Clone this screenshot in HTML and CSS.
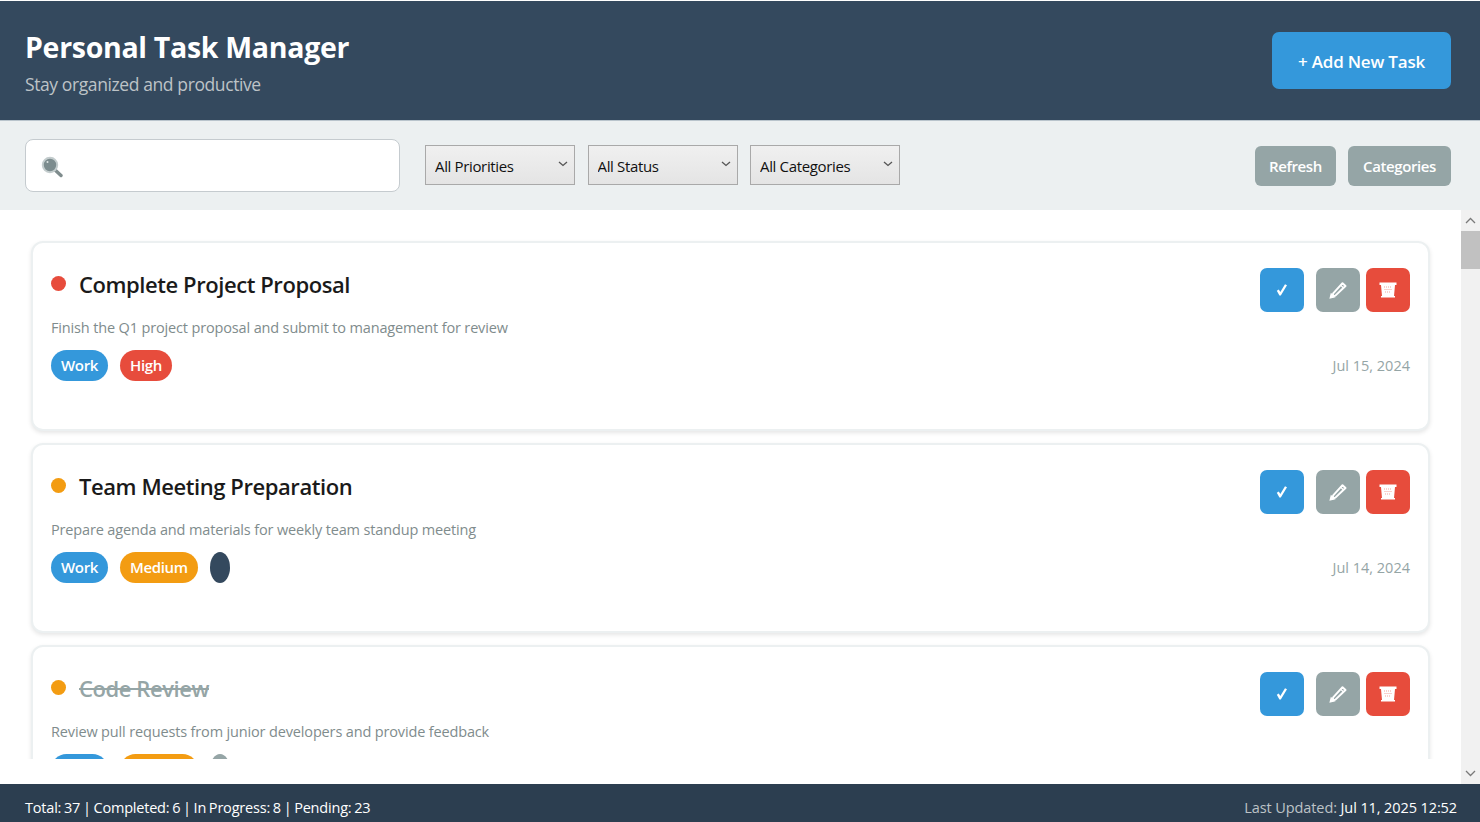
FILE: index.html
```html
<!DOCTYPE html>
<html lang="en">
<head>
    <meta charset="UTF-8">
    <meta name="viewport" content="width=device-width, initial-scale=1.0">
    <title>Personal Task Manager</title>
    <link rel="stylesheet" href="styles.css">
</head>
<body>

    <!-- Header -->
    <header class="header">
        <div>
            <h1>Personal Task Manager</h1>
            <p class="subtitle">Stay organized and productive</p>
        </div>
        <button class="add-btn">+ Add New Task</button>
    </header>

    <!-- Toolbar -->
    <div class="toolbar">
        <div class="search">
            <svg class="search-icon" width="22" height="22" viewBox="0 0 22 22">
                <path d="M13 13l7 6.5" stroke="#7f8c8d" stroke-width="3.4" stroke-linecap="round"/>
                <circle cx="9" cy="9" r="7.2" fill="#7c8c8e" stroke="#c3cccd" stroke-width="2"/>
                <circle cx="6.5" cy="6" r="1" fill="#dfe5e5"/>
            </svg>
        </div>
        <select class="filter"><option>All Priorities</option></select>
        <select class="filter"><option>All Status</option></select>
        <select class="filter"><option>All Categories</option></select>
        <div class="toolbar-right">
            <button class="grey-btn btn-refresh">Refresh</button>
            <button class="grey-btn btn-categories">Categories</button>
        </div>
    </div>

    <!-- Task list -->
    <main class="main">
        <div class="list-area">
            <div class="task-list">

                <div class="task">
                    <div class="task-top">
                        <div class="task-title">
                            <span class="dot dot-high"></span>
                            <h3>Complete Project Proposal</h3>
                        </div>
                        <div class="actions">
                            <button class="icon-btn btn-done"><svg width="14" height="14" viewBox="0 0 14 14"><path d="M1.8 7.8l2-1.3 1.5 2.5L10 1.2l2 1.1-6.2 10.2H4.4z" fill="#fff"/></svg></button>
                            <button class="icon-btn btn-edit"><svg width="20" height="20" viewBox="0 0 20 20"><path d="M14.5 3.2l3 2.8L7.4 15.6l-3 .8.8-3z" fill="none" stroke="#fff" stroke-width="2" stroke-linejoin="round"/><path d="M12.5 5l3 3M2.2 18l1-4.2 3.2 3.1z" fill="#fff" stroke="#fff" stroke-width="1.2"/></svg></button>
                            <button class="icon-btn btn-delete"><svg width="18" height="18" viewBox="0 0 18 18"><path d="M.5 1.5h17v2.4H16l-1 11h1v1.6H2v-1.6h1l-1-11H.5z" fill="#fff"/><path d="M5 6h8M5.5 8.5h7M6 11h6" stroke="#f3a59c" stroke-width="1" stroke-dasharray="1 1"/></svg></button>
                        </div>
                    </div>
                    <p class="task-desc">Finish the Q1 project proposal and submit to management for review</p>
                    <div class="task-meta">
                        <div class="tags">
                            <span class="tag tag-blue">Work</span>
                            <span class="tag tag-red">High</span>
                        </div>
                        <span class="task-date">Jul 15, 2024</span>
                    </div>
                </div>

                <div class="task">
                    <div class="task-top">
                        <div class="task-title">
                            <span class="dot dot-medium"></span>
                            <h3>Team Meeting Preparation</h3>
                        </div>
                        <div class="actions">
                            <button class="icon-btn btn-done"><svg width="14" height="14" viewBox="0 0 14 14"><path d="M1.8 7.8l2-1.3 1.5 2.5L10 1.2l2 1.1-6.2 10.2H4.4z" fill="#fff"/></svg></button>
                            <button class="icon-btn btn-edit"><svg width="20" height="20" viewBox="0 0 20 20"><path d="M14.5 3.2l3 2.8L7.4 15.6l-3 .8.8-3z" fill="none" stroke="#fff" stroke-width="2" stroke-linejoin="round"/><path d="M12.5 5l3 3M2.2 18l1-4.2 3.2 3.1z" fill="#fff" stroke="#fff" stroke-width="1.2"/></svg></button>
                            <button class="icon-btn btn-delete"><svg width="18" height="18" viewBox="0 0 18 18"><path d="M.5 1.5h17v2.4H16l-1 11h1v1.6H2v-1.6h1l-1-11H.5z" fill="#fff"/><path d="M5 6h8M5.5 8.5h7M6 11h6" stroke="#f3a59c" stroke-width="1" stroke-dasharray="1 1"/></svg></button>
                        </div>
                    </div>
                    <p class="task-desc">Prepare agenda and materials for weekly team standup meeting</p>
                    <div class="task-meta">
                        <div class="tags">
                            <span class="tag tag-blue">Work</span>
                            <span class="tag tag-orange">Medium</span>
                            <span class="tag tag-empty tag-dark"></span>
                        </div>
                        <span class="task-date">Jul 14, 2024</span>
                    </div>
                </div>

                <div class="task">
                    <div class="task-top">
                        <div class="task-title">
                            <span class="dot dot-medium"></span>
                            <h3 class="done-title">Code Review</h3>
                        </div>
                        <div class="actions">
                            <button class="icon-btn btn-done"><svg width="14" height="14" viewBox="0 0 14 14"><path d="M1.8 7.8l2-1.3 1.5 2.5L10 1.2l2 1.1-6.2 10.2H4.4z" fill="#fff"/></svg></button>
                            <button class="icon-btn btn-edit"><svg width="20" height="20" viewBox="0 0 20 20"><path d="M14.5 3.2l3 2.8L7.4 15.6l-3 .8.8-3z" fill="none" stroke="#fff" stroke-width="2" stroke-linejoin="round"/><path d="M12.5 5l3 3M2.2 18l1-4.2 3.2 3.1z" fill="#fff" stroke="#fff" stroke-width="1.2"/></svg></button>
                            <button class="icon-btn btn-delete"><svg width="18" height="18" viewBox="0 0 18 18"><path d="M.5 1.5h17v2.4H16l-1 11h1v1.6H2v-1.6h1l-1-11H.5z" fill="#fff"/><path d="M5 6h8M5.5 8.5h7M6 11h6" stroke="#f3a59c" stroke-width="1" stroke-dasharray="1 1"/></svg></button>
                        </div>
                    </div>
                    <p class="task-desc">Review pull requests from junior developers and provide feedback</p>
                    <div class="task-meta">
                        <div class="tags">
                            <span class="tag tag-blue">Work</span>
                            <span class="tag tag-orange">Medium</span>
                            <span class="tag tag-empty tag-grey"></span>
                        </div>
                    </div>
                </div>

            </div>
        </div>

        <div class="scrollbar">
            <svg class="scroll-arrow" width="19" height="21" viewBox="0 0 19 21"><path d="M5 13l4.5-4.5L14 13" fill="none" stroke="#7a7a7a" stroke-width="1.3"/></svg>
            <div class="scroll-thumb"></div>
            <div class="scroll-track"></div>
            <svg class="scroll-arrow" width="19" height="21" viewBox="0 0 19 21"><path d="M5 8l4.5 4.5L14 8" fill="none" stroke="#7a7a7a" stroke-width="1.3"/></svg>
        </div>
    </main>

    <!-- Status bar -->
    <footer class="footer">
        <span class="totals">Total: 37 | Completed: 6 | In Progress: 8 | Pending: 23</span>
        <span class="updated"><span class="updated-label">Last Updated:</span> Jul 11, 2025 12:52</span>
    </footer>

</body>
</html>
```

FILE: styles.css
```css
* {
    margin: 0;
    padding: 0;
    box-sizing: border-box;
    font-family: 'Open Sans', 'Noto Sans', sans-serif;
}

body {
    height: 100vh;
    display: flex;
    flex-direction: column;
    background: white;
    overflow: hidden;
}

button {
    border: none;
    color: white;
    cursor: pointer;
}

/* Header */
.header {
    height: 120px;
    margin-top: 1px;
    flex-shrink: 0;
    display: flex;
    justify-content: space-between;
    align-items: center;
    padding: 0 29px 0 25px;
    background: #34495e;
    border-bottom: 1px solid #b9c4cc;
}

.header h1 {
    margin-top: 3px;
    font-size: 28.5px;
    line-height: 38px;
    font-weight: 700;
    color: white;
    letter-spacing: -0.3px;
}

.subtitle {
    margin-top: 6px;
    font-size: 17.5px;
    line-height: 24px;
    color: #bdc3c7;
    letter-spacing: -0.4px;
}

.add-btn {
    width: 179px;
    height: 57px;
    padding-top: 1px;
    background: #3498db;
    border-radius: 7px;
    font-size: 17px;
    font-weight: 600;
    letter-spacing: -0.2px;
}

/* Toolbar */
.toolbar {
    height: 89px;
    flex-shrink: 0;
    display: flex;
    align-items: center;
    padding: 0 29px 0 25px;
    background: #ecf0f1;
}

.search {
    width: 375px;
    height: 53px;
    margin-right: 25px;
    display: flex;
    align-items: center;
    padding-left: 15px;
    background: white;
    border: 1.5px solid #c5cbcf;
    border-radius: 8px;
}

.search-icon {
    margin-top: 2px;
}

.filter {
    width: 150px;
    height: 40px;
    margin: 0 12.5px 2px 0;
    padding: 2px 0 0 9px;
    appearance: none;
    border: 1px solid #a9a9a9;
    border-radius: 0;
    font-size: 15px;
    letter-spacing: -0.35px;
    color: #111;
    background:
        url("data:image/svg+xml,%3Csvg xmlns='http://www.w3.org/2000/svg' width='10' height='6'%3E%3Cpath d='M1 1l4 3.5L9 1' fill='none' stroke='%23555' stroke-width='1.3'/%3E%3C/svg%3E") no-repeat right 6px top 15px,
        linear-gradient(#f0f0f0, #e4e4e4);
}

.toolbar-right {
    margin-left: auto;
    display: flex;
    gap: 12px;
}

.grey-btn {
    height: 40px;
    background: #95a5a6;
    border-radius: 6px;
    font-size: 15px;
    font-weight: 600;
    letter-spacing: -0.4px;
}

.btn-refresh { width: 81px; }
.btn-categories { width: 103px; }

/* Task list */
.main {
    flex: 1;
    min-height: 0;
    display: flex;
}

.list-area {
    flex: 1;
    min-width: 0;
    padding-bottom: 25px;
}

.task-list {
    height: 100%;
    overflow: hidden;
    padding: 31px 31px 0;
}

.task {
    height: 190px;
    margin-bottom: 12px;
    padding: 25px 18px 0;
    background: white;
    border: 2px solid #ecf0f1;
    border-radius: 12px;
    box-shadow: 0 2px 4px rgba(0, 0, 0, 0.1);
}

.task-top {
    display: flex;
    justify-content: space-between;
    margin-bottom: 5px;
}

.task-title {
    display: flex;
    gap: 13px;
}

.task-title h3 {
    font-size: 22px;
    line-height: 32px;
    font-weight: 600;
    color: #1a1a1a;
    letter-spacing: -0.43px;
}

.done-title {
    color: #95a5a6 !important;
    text-decoration: line-through;
}

.dot {
    width: 15px;
    height: 15px;
    margin-top: 8px;
    border-radius: 50%;
}

.dot-high { background: #e74c3c; }
.dot-medium { background: #f39c12; }

.actions {
    display: flex;
    gap: 6px;
}

.icon-btn {
    width: 44px;
    height: 44px;
    display: flex;
    align-items: center;
    justify-content: center;
    border-radius: 7px;
}

.btn-done { background: #3498db; margin-right: 6px; }
.btn-edit { background: #95a5a6; }
.btn-delete { background: #e74c3c; }

.task-desc {
    font-size: 14.5px;
    line-height: 22px;
    color: #7f8c8d;
    letter-spacing: -0.15px;
}

.task-meta {
    margin-top: 11px;
    display: flex;
    justify-content: space-between;
    align-items: center;
}

.tags {
    display: flex;
    gap: 12px;
}

.tag {
    height: 31px;
    padding: 0 10px 2px;
    display: flex;
    align-items: center;
    border-radius: 16px;
    font-size: 15px;
    font-weight: 600;
    letter-spacing: -0.35px;
    color: white;
}

.tag-blue { background: #3498db; }
.tag-red { background: #e74c3c; }
.tag-orange { background: #f39c12; }
.tag-dark { background: #34495e; }
.tag-grey { background: #95a5a6; }
.tag-empty { width: 20px; border-radius: 50%; }

.task-date {
    font-size: 14.5px;
    color: #95a5a6;
    letter-spacing: 0;
}

/* Scrollbar */
.scrollbar {
    width: 19px;
    display: flex;
    flex-direction: column;
    background: #f1f1f1;
}

.scroll-arrow {
    display: block;
    flex-shrink: 0;
}

.scroll-thumb {
    height: 38px;
    background: #c1c1c1;
}

.scroll-track {
    flex: 1;
}

/* Status bar */
.footer {
    height: 38px;
    flex-shrink: 0;
    display: flex;
    justify-content: space-between;
    align-items: center;
    padding: 8px 23px 0 25px;
    background: #2c3e50;
    color: white;
    font-size: 14.5px;
}

.totals {
    letter-spacing: -0.2px;
    word-spacing: -0.8px;
}

.updated {
    letter-spacing: -0.1px;
}

.updated-label {
    color: #bdc3c7;
}
```
